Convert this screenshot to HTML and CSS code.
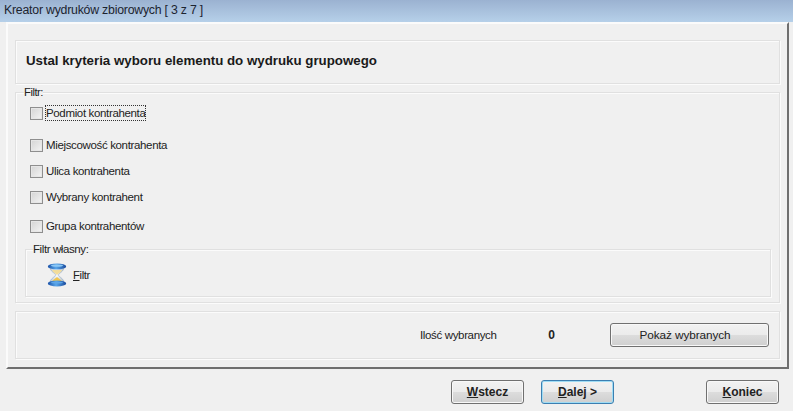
FILE: index.html
```html
<!DOCTYPE html>
<html lang="pl">
<head>
<meta charset="utf-8">
<title>Kreator wydruków zbiorowych</title>
<link rel="stylesheet" href="styles.css">
</head>
<body>
<div class="titlebar">Kreator wydruków zbiorowych [ 3 z 7 ]</div>
<main class="frame">
  <div class="panel header"><h1>Ustal kryteria wyboru elementu do wydruku grupowego</h1></div>
  <fieldset class="group filter">
    <legend>Filtr:</legend>
    <label class="row row-1"><span class="check"></span><span class="focus">Podmiot kontrahenta</span></label>
    <label class="row row-2"><span class="check"></span><span>Miejscowość kontrahenta</span></label>
    <label class="row row-3"><span class="check"></span><span>Ulica kontrahenta</span></label>
    <label class="row row-4"><span class="check"></span><span>Wybrany kontrahent</span></label>
    <label class="row row-5"><span class="check"></span><span>Grupa kontrahentów</span></label>
    <fieldset class="group own">
      <legend>Filtr własny:</legend>
      <div class="own-item">
        <svg class="hourglass" width="20" height="24" viewBox="0 0 20 24" aria-hidden="true">
          <defs>
            <linearGradient id="cap" x1="0" y1="0" x2="1" y2="0">
              <stop offset="0" stop-color="#1c52a8"/><stop offset=".45" stop-color="#58a6ea"/><stop offset="1" stop-color="#1a4a9c"/>
            </linearGradient>
            <linearGradient id="glass" x1="0" y1="0" x2="1" y2="0">
              <stop offset="0" stop-color="#b9c8d8"/><stop offset=".5" stop-color="#f4f7fa"/><stop offset="1" stop-color="#a9bacb"/>
            </linearGradient>
          </defs>
          <path d="M3 4 C3 9 8.5 10 8.5 12 C8.5 14 3 15 3 20 H17 C17 15 11.5 14 11.5 12 C11.5 10 17 9 17 4 Z" fill="url(#glass)" stroke="#8fa3b8" stroke-width=".5"/>
          <path d="M5 7 H15 C14 9.5 10.8 10.5 10 12 C9.2 10.5 6 9.5 5 7 Z" fill="#f2dc9a"/>
          <path d="M10 14 C11.5 15.5 14.5 16.5 15.5 19 H4.5 C5.5 16.5 8.5 15.5 10 14 Z" fill="#f0c550"/>
          <ellipse cx="10" cy="3.4" rx="9.2" ry="3" fill="url(#cap)"/>
          <ellipse cx="10" cy="2.6" rx="6" ry="1.1" fill="#8cc8f5"/>
          <ellipse cx="10" cy="20.4" rx="9.2" ry="3" fill="url(#cap)"/>
          <ellipse cx="10" cy="19.6" rx="6" ry="1" fill="#5ea6e8"/>
        </svg>
        <span><u>F</u>iltr</span>
      </div>
    </fieldset>
  </fieldset>
  <div class="panel summary">
    <span class="count-label">Ilość wybranych</span>
    <strong class="count">0</strong>
    <button class="btn show" type="button">Pokaż wybranych</button>
  </div>
</main>
<footer class="footer">
  <button class="btn nav" type="button"><u>W</u>stecz</button>
  <button class="btn nav default" type="button"><u>D</u>alej &gt;</button>
  <button class="btn nav end" type="button"><u>K</u>oniec</button>
</footer>
</body>
</html>
```
FILE: styles.css
```css
* { box-sizing: border-box; }
html, body { height: 100%; }
body {
  margin: 0;
  background: #f0f0f0;
  font: 12px/14px "Liberation Sans", Arial, sans-serif;
  color: #222;
  overflow: hidden;
}
.titlebar {
  height: 22px;
  padding: 3px 4px 0;
  background: linear-gradient(#9bb2d1, #b6d0e9);
  font-size: 12.3px;
  letter-spacing: -0.22px;
  color: #1c2430;
}
.frame {
  width: 783px;
  height: 347px;
  margin: 0 0 0 6px;
  padding: 16px 7px 0 7px;
  background: #f0f0f0;
  border-top: 2px solid #fbfbfb;
  border-left: 2px solid #fbfbfb;
  border-right: 2px solid #6f6f6f;
  border-bottom: 2px solid #6f6f6f;
}
.panel {
  width: 765px;
  border: 1px solid #e0e0e0;
  box-shadow: inset 1px 1px 0 #fbfbfb, 1px 1px 0 #fbfbfb;
}
.header {
  height: 44px;
  display: flex;
  align-items: center;
  padding-left: 10px;
}
h1 {
  margin: 0;
  font-size: 13.3px;
  font-weight: bold;
  color: #1a1a1a;
  position: relative;
  top: -1px;
}
.group {
  margin: 0;
  min-width: 0;
  border: 1px solid #e0e0e0;
  box-shadow: inset 1px 1px 0 #fbfbfb, 1px 1px 0 #fbfbfb;
}
.filter {
  width: 765px;
  height: 218px;
  margin-top: 1px;
  padding: 0 8px 0 14px;
}
legend {
  padding: 0;
  margin-left: -6px;
  line-height: 14px;
  font-size: 11.3px;
  letter-spacing: -0.5px;
  background: #f0f0f0;
}
.row {
  display: flex;
  align-items: center;
  height: 16px;
  gap: 3px;
  font-size: 11.5px;
  letter-spacing: -0.35px;
}
.row-1 { margin-top: 6px; }
.row-2 { margin-top: 16px; }
.row-3 { margin-top: 10px; }
.row-4 { margin-top: 10px; }
.row-5 { margin-top: 13px; }
.check {
  width: 13px;
  height: 13px;
  border: 1px solid #8e8e8e;
  background: linear-gradient(135deg, #d4d4d4, #f4f4f4);
  box-shadow: inset 0 0 0 1px #e6e6e6;
}
.focus { outline: 1px dotted #333; outline-offset: 0; }
.own {
  width: 746px;
  height: 55px;
  margin-top: 8px;
  margin-left: -5px;
  padding: 0 0 0 21px;
}
.own legend { margin-left: -14px; font-size: 11.5px; letter-spacing: -0.4px; }
.own-item {
  display: flex;
  align-items: center;
  gap: 6px;
  font-size: 11.3px;
  letter-spacing: -0.4px;
  margin-top: 7px;
}
.hourglass { display: block; }
.summary {
  height: 48px;
  margin-top: 8px;
  display: flex;
  align-items: center;
  font-size: 11.5px;
  letter-spacing: -0.35px;
}
.count-label { margin-left: 404px; }
.count { width: 58px; text-align: right; font-size: 12px; }
.btn {
  font-family: "Liberation Sans", Arial, sans-serif;
  color: #222;
  padding: 0;
  border: 1px solid #707070;
  border-radius: 3px;
  background: linear-gradient(#f2f2f2 0, #ebebeb 48%, #dcdcdc 52%, #cfcfcf 100%);
  box-shadow: inset 0 0 0 1px #f8f8f8;
}
.show {
  width: 159px;
  height: 24px;
  margin-left: 55px;
  padding-right: 8px;
  font-size: 11.8px;
  letter-spacing: -0.1px;
}
.footer {
  display: flex;
  padding: 11px 0 0 451px;
}
.nav {
  width: 73px;
  height: 24px;
  font-size: 12px;
  font-weight: bold;
}
.default {
  margin-left: 17px;
  border-color: #3c7fb1;
  box-shadow: inset 0 0 0 1px #9fdcf4;
}
.end { margin-left: 92px; }
```
